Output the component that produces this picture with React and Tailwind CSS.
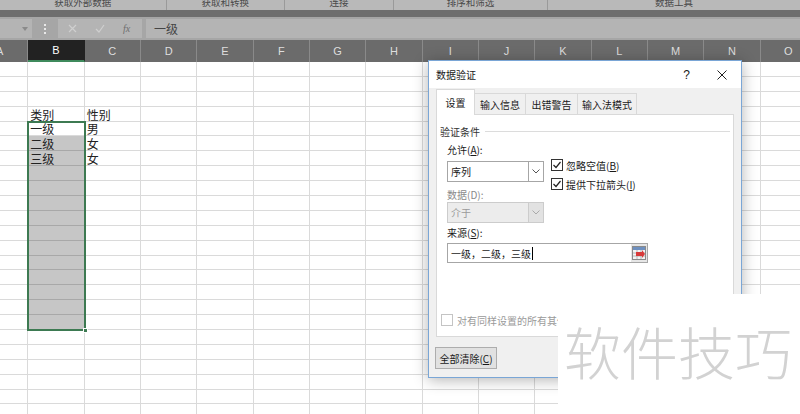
import React from "react";

const COLS = ["A", "B", "C", "D", "E", "F", "G", "H", "I", "J", "K", "L", "M", "N", "O"];
const ROW_COUNT = 24;

const cells = {
  "3-1": "类别",
  "3-2": "性别",
  "4-1": "一级",
  "4-2": "男",
  "5-1": "二级",
  "5-2": "女",
  "6-1": "三级",
  "6-2": "女",
};

const font = { fontFamily: '"Noto Sans CJK SC", "Noto Sans", sans-serif' };

const Check = ({ checked, disabled }) => (
  <span
    className={`w-[12px] h-[12px] border flex items-center justify-center bg-white shrink-0 ${
      disabled ? "border-[#c4c4c4]" : "border-[#333333]"
    }`}
  >
    {checked && (
      <svg width="10" height="10" viewBox="0 0 10 10">
        <polyline points="1.5,5 4,7.5 8.5,2" fill="none" stroke="#222" strokeWidth="1.2" />
      </svg>
    )}
  </span>
);

const Chevron = ({ color = "#555" }) => (
  <svg width="8" height="5" viewBox="0 0 8 5">
    <polyline points="0.5,0.5 4,4 7.5,0.5" fill="none" stroke={color} strokeWidth="1" />
  </svg>
);

const RibbonLabels = () => (
  <div className="h-[10px] bg-[#b9b9b9] flex text-[9.5px] text-[#4a4a4a] leading-[10px] overflow-hidden">
    <div className="w-[168px] border-r border-[#9a9a9a] text-center -mt-[3px]">获取外部数据</div>
    <div className="w-[119px] border-r border-[#9a9a9a] text-center -mt-[3px]">获取和转换</div>
    <div className="w-[110px] border-r border-[#9a9a9a] text-center -mt-[3px]">连接</div>
    <div className="w-[155px] border-r border-[#9a9a9a] text-center -mt-[3px]">排序和筛选</div>
    <div className="w-[254px] text-center -mt-[3px]">数据工具</div>
  </div>
);

const FormulaBar = () => (
  <div className="h-[23px] bg-[#a6a6a6] flex items-center">
    <div className="w-[32px] h-[19px] bg-[#b4b4b4] flex items-center justify-end pr-[4px]">
      <svg width="6" height="4" viewBox="0 0 6 4">
        <polygon points="0,0 6,0 3,4" fill="#8a8a8a" />
      </svg>
    </div>
    <div className="w-[26px] flex justify-center">
      <div className="flex flex-col gap-[2px]">
        <span className="w-[2px] h-[2px] bg-[#e8e8e8]" />
        <span className="w-[2px] h-[2px] bg-[#e8e8e8]" />
        <span className="w-[2px] h-[2px] bg-[#e8e8e8]" />
      </div>
    </div>
    <div className="w-[84px] h-[19px] bg-[#b4b4b4] flex items-center">
      <svg className="ml-[10px]" width="9" height="9" viewBox="0 0 9 9">
        <path d="M1 1L8 8M8 1L1 8" stroke="#cfcfcf" strokeWidth="1.2" />
      </svg>
      <svg className="ml-[18px]" width="10" height="9" viewBox="0 0 10 9">
        <polyline points="1,5 4,8 9,1" fill="none" stroke="#cfcfcf" strokeWidth="1.2" />
      </svg>
      <span className="ml-[18px] text-[10px] italic text-[#6e6e6e]" style={{ fontFamily: '"Liberation Serif", serif' }}>
        fx
      </span>
    </div>
    <div className="ml-[4px] flex-1 h-[19px] bg-[#b4b4b4] flex items-center pl-[8px] text-[12px] text-[#454545]">
      一级
    </div>
  </div>
);

const Grid = () => (
  <div className="relative -ml-[28px] flex-1 overflow-hidden bg-white">
    <div className="grid grid-cols-[repeat(15,56.33px)] h-[22px] bg-[#6b6b6b]">
      {COLS.map((c) => (
        <div
          key={c}
          className={`flex items-center justify-center text-[11px] border-r ${
            c === "B"
              ? "bg-[#222222] text-white border-[#222222] border-b-2 border-b-[#3f8a5c]"
              : "text-[#dedede] border-[#8a8a8a]"
          }`}
          style={{ fontFamily: '"Liberation Sans", sans-serif' }}
        >
          {c}
        </div>
      ))}
    </div>
    <div className="grid grid-cols-[repeat(15,56.33px)] auto-rows-[14.9px]">
      {Array.from({ length: ROW_COUNT }).map((_, r) =>
        COLS.map((c, ci) => {
          const sel = ci === 1 && r >= 5 && r <= 17;
          const text = cells[`${r}-${ci}`];
          return (
            <div
              key={`${r}-${c}`}
              className={`border-r border-b flex items-end pl-[2px] text-[12px] leading-[13px] text-[#222] overflow-hidden ${
                sel ? "bg-[#c6c6c6] border-[#a8a8a8]" : "border-[#dadada]"
              }`}
            >
              {text}
            </div>
          );
        })
      )}
    </div>
    <div className="absolute left-[55px] top-[81px] w-[59px] h-[210px] border-2 border-[#3d7a52]">
      <span className="absolute -right-[4px] -bottom-[4px] w-[5px] h-[5px] bg-[#3d7a52] border border-white" />
    </div>
  </div>
);

const RangeIcon = () => (
  <svg width="14" height="14" viewBox="0 0 14 14">
    <rect x="0.5" y="0.5" width="13" height="13" fill="#f4f4f4" stroke="#8a8a8a" />
    <rect x="1" y="1" width="12" height="3" fill="#6d8fbf" />
    <path d="M1 7H13M1 10H13M5 4V13M9 4V13" stroke="#a8a8a8" strokeWidth="0.8" />
    <polygon points="4,6 10,6 10,4 13,8 10,12 10,10 4,10" fill="#d83a3a" />
  </svg>
);

const Dialog = () => (
  <div className="absolute left-[428px] top-[60px] w-[314px] h-[318px] border border-[#7aa6d6] bg-[#f0f0f0] shadow-[0_2px_14px_rgba(0,0,0,0.3)] text-[10px] text-[#1a1a1a]">
    <div className="h-[27px] bg-white flex items-center pl-[7px]">
      <span>数据验证</span>
      <span className="ml-auto text-[12px]" style={{ fontFamily: '"Liberation Sans", sans-serif' }}>
        ?
      </span>
      <svg className="ml-[27px] mr-[14px]" width="10" height="10" viewBox="0 0 10 10">
        <path d="M0.5 0.5L9.5 9.5M9.5 0.5L0.5 9.5" stroke="#222" strokeWidth="1" />
      </svg>
    </div>
    <div className="h-[26px] pl-[7px] flex items-end bg-[#f0f0f0]">
      <div className="w-[39px] h-[26px] bg-white border border-b-0 border-[#d9d9d9] flex items-center justify-center relative z-10 -mb-px">
        设置
      </div>
      <div className="w-[51px] h-[21px] border-t border-r border-[#d9d9d9] flex items-center justify-center">输入信息</div>
      <div className="w-[52px] h-[21px] border-t border-r border-[#d9d9d9] flex items-center justify-center">出错警告</div>
      <div className="w-[59px] h-[21px] border-t border-r border-[#d9d9d9] flex items-center justify-center">输入法模式</div>
    </div>
    <div className="ml-[7px] w-[298px] h-[223px] bg-white border border-[#d9d9d9] flex flex-col">
      <div className="mt-[9px] pl-[3px] h-[14px] flex items-center">
        <span className="text-[#333]">验证条件</span>
        <span className="flex-1 h-px bg-[#dcdcdc] ml-[5px] mr-[3px]" />
      </div>
      <div className="pl-[10px] flex">
        <div className="w-[97px] flex flex-col">
          <div className="mt-[5px] h-[14px] leading-[14px]">
            允许(<span className="underline">A</span>):
          </div>
          <div className="mt-[4px] h-[21px] border border-[#a6a6a6] flex">
            <span className="flex-1 pl-[3px] leading-[19px]">序列</span>
            <span className="w-[15px] border-l border-[#a6a6a6] flex items-center justify-center">
              <Chevron />
            </span>
          </div>
          <div className="mt-[6px] h-[14px] leading-[14px] text-[#8a8a8a]">数据(D):</div>
          <div className="h-[21px] border border-[#cccccc] bg-[#ececec] flex">
            <span className="flex-1 pl-[3px] leading-[19px] text-[#9a9a9a]">介于</span>
            <span className="w-[15px] border-l border-[#cccccc] bg-[#e2e2e2] flex items-center justify-center">
              <Chevron color="#aaa" />
            </span>
          </div>
        </div>
        <div className="ml-[7px] flex flex-col">
          <div className="mt-[20px] h-[14px] flex items-center gap-[3px]">
            <Check checked />
            <span>
              忽略空值(<span className="underline">B</span>)
            </span>
          </div>
          <div className="mt-[5px] h-[14px] flex items-center gap-[3px]">
            <Check checked />
            <span>
              提供下拉箭头(<span className="underline">I</span>)
            </span>
          </div>
        </div>
      </div>
      <div className="pl-[10px] mt-[3px] h-[14px] leading-[14px]">
        来源(<span className="underline">S</span>):
      </div>
      <div className="ml-[10px] mt-[3px] w-[201px] h-[20px] border border-[#a6a6a6] flex items-center">
        <span className="flex-1 pl-[3px] flex items-center">
          一级，二级，三级
          <span className="w-px h-[13px] bg-black ml-px" />
        </span>
        <span className="w-[16px] h-[18px] bg-[#e6e6e6] flex items-center justify-center">
          <RangeIcon />
        </span>
      </div>
      <div className="pl-[4px] mt-[50px] h-[14px] flex items-center gap-[4px] text-[#9a9a9a]">
        <Check disabled />
        <span className="w-[102px] overflow-hidden whitespace-nowrap">对有同样设置的所有其他单元格应用这些更改</span>
      </div>
    </div>
    <div className="ml-[6px] mt-[10px] w-[62px] h-[22px] border border-[#adadad] bg-[#e1e1e1] flex items-center justify-center">
      全部清除(<span className="underline">C</span>)
    </div>
  </div>
);

const App = () => (
  <div className="relative w-[800px] h-[414px] overflow-hidden flex flex-col bg-white" style={font}>
    <RibbonLabels />
    <div className="h-[7px] bg-[#6e6e6e]" />
    <FormulaBar />
    <Grid />
    <Dialog />
    <div className="absolute left-[558px] top-[294px] w-[242px] h-[120px] bg-white pl-[6px] pt-[26px]">
      <span className="text-[57px] leading-[60px] font-light text-[#d2d2d2] whitespace-nowrap">软件技巧</span>
    </div>
  </div>
);

export default App;
